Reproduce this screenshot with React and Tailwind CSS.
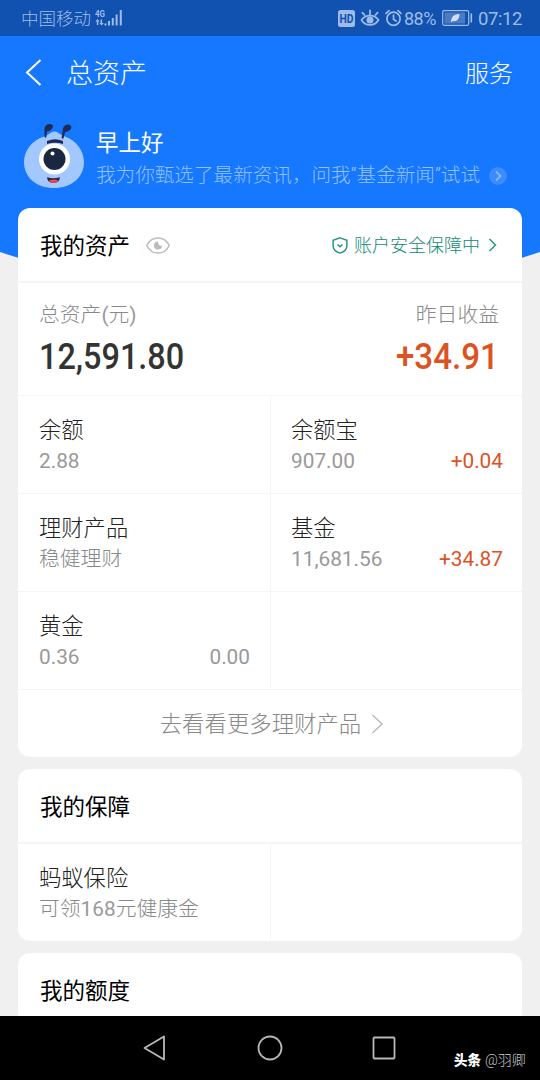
const assets = [
  { name: "余额", value: "2.88" },
  { name: "余额宝", value: "907.00", gain: "+0.04" },
  { name: "理财产品", value: "稳健理财" },
  { name: "基金", value: "11,681.56", gain: "+34.87" },
  { name: "黄金", value: "0.36", gain: "0.00", flat: true },
  null,
];

const insurance = [{ name: "蚂蚁保险", value: "可领168元健康金" }, null];

function StatusBar() {
  return (
    <div className="h-9 bg-[#1151b0] flex items-center justify-between pl-[21px] pr-[18px] text-[#9dbce8] whitespace-nowrap">
      <div className="flex items-center gap-[4px]">
        <span className="text-[17.5px] leading-9 font-light pt-[2px]">中国移动</span>
        <svg width="29" height="18" viewBox="0 0 29 18" fill="currentColor">
          <text x="0" y="7.5" fontSize="9.5" fontWeight="700" textLength="10" lengthAdjust="spacingAndGlyphs">4G</text>
          <path d="M2.500 10l2.200 2.500H3.300V16H1.800v-3.500H.3zM6.500 16.500l-2.200-2.500h1.300v-3.500h1.500V14h1.600z" />
          <path d="M9.5 14.500h2V16.500h-2zM13 12h2v4.500h-2zM16.800 9h2v7.500h-2zM20.600 5.500h2v11h-2zM24.800 1h2v15.500h-2z" />
        </svg>
      </div>
      <div className="flex items-center">
        <svg width="17" height="17" viewBox="0 0 17 17">
          <rect width="17" height="17" rx="2.5" fill="currentColor" />
          <text x="1.500" y="12.8" fontSize="12" fontWeight="700" fill="#1151b0" textLength="14" lengthAdjust="spacingAndGlyphs">HD</text>
        </svg>
        <svg className="ml-[5px]" width="20" height="18" viewBox="0 0 20 18" fill="none" stroke="currentColor" strokeWidth="1.8" strokeLinecap="round">
          <path d="M1.5 11C5.500 5.200 14.500 5.200 18.500 11 14.500 17.600 5.500 17.600 1.500 11z" />
          <circle cx="10" cy="11" r="3.5" fill="currentColor" stroke="none" />
          <path d="M10 5.500V1.500M4.600 6L2.400 3.600M15.400 6l2.200-2.400" />
        </svg>
        <svg className="ml-[5px]" width="17" height="18" viewBox="0 0 17 18" fill="none" stroke="currentColor" strokeWidth="1.700" strokeLinecap="round">
          <circle cx="8.5" cy="9.8" r="6.600" />
          <path d="M8.5 6v4.200l2.600 1.800M1 4.400L4 1.600M16 4.400l-3-2.800" />
        </svg>
        <span className="ml-[2px] w-[34px] text-[18px] tracking-[-0.5px] leading-9 pt-[2px]">88%</span>
        <svg className="ml-[4px]" width="31" height="16" viewBox="0 0 31 16">
          <rect x="0.7" y="0.7" width="26" height="14.600" rx="1.500" fill="none" stroke="currentColor" strokeWidth="1.200" />
          <rect x="2.500" y="2.500" width="20.500" height="11" fill="currentColor" opacity="0.400" />
          <path d="M9 12.500c0-5 2-8 8.500-8.500-.3 5-2.300 7.800-6.700 7z" fill="#cfe0fa" />
          <rect x="28.500" y="3.500" width="1.600" height="9" fill="currentColor" />
        </svg>
        <span className="ml-[5px] text-[18.5px] tracking-[-0.4px] leading-9 pt-[2px]">07:12</span>
      </div>
    </div>
  );
}

function Ant() {
  return (
    <svg width="60" height="66" viewBox="0 0 60 66">
      <path
        d="M30.500 8.500C34 8.500 36 12 41 13.500 52 17 60 28 60 39 60 55 47 65 30 65S0 55 0 39C0 28 8 17 20 13.500 25 12 27 8.500 30.500 8.500z"
        fill="#a3c8ff"
      />
      <g fill="#1e2a55">
        <path d="M20.500 14.500V5.500C21 1.500 25 0 28 1.500 30.500 3.500 27.500 8 23 8.500L22.300 14.500z" />
        <path d="M37.500 15.500L39 5.500C40 2 44 .5 46.500 2.500 49 5 45.500 8.500 41 9L39.500 15.500z" />
        <path d="M23 18q8-3.500 16 0v3q-8-2.500-16 0z" />
      </g>
      <circle cx="30.500" cy="36" r="15.500" fill="#fff" />
      <circle cx="30.500" cy="36" r="11" fill="#1b2740" />
      <circle cx="28.500" cy="30.500" r="2" fill="#fff" />
      <path d="M23 54.300q6.500 2 13 0-.5 5.700-6.500 5.700t-6.500-5.700z" fill="#28233f" />
      <path d="M25 57.500q5-2 9.500 0-1.500 2.500-5 2.500t-4.500-2.500z" fill="#e8484f" />
    </svg>
  );
}

function Header() {
  return (
    <div className="bg-[#1677ff] h-[216px] text-white">
      <div className="h-[72px] flex items-center justify-between pl-[25px] pr-[27px]">
        <div className="flex items-center">
          <svg width="17" height="27" viewBox="0 0 17 27" fill="none" stroke="currentColor" strokeWidth="2">
            <path d="M15.500 1L2 13.500 15.500 26" />
          </svg>
          <span className="ml-6 mt-1 text-[27px] leading-9 font-light">总资产</span>
        </div>
        <span className="mt-1 text-[24px] leading-9 font-light">服务</span>
      </div>
      <div className="flex pl-6 pt-[15px]">
        <Ant />
        <div className="ml-3 pt-1 whitespace-nowrap">
          <div className="text-[22.500px] leading-8">早上好</div>
          <div className="flex items-center text-[#94c1ff]">
            <span className="pt-px text-[19.600px] leading-8 font-light">
              我为你甄选了最新资讯，问我“基金新闻”试试
            </span>
            <svg className="ml-[9px]" width="18" height="18" viewBox="0 0 18 18" fill="none">
              <circle cx="9" cy="9" r="9" fill="#3c8cff" />
              <path d="M7 4.500L11.500 9 7 13.500" stroke="currentColor" strokeWidth="1.500" />
            </svg>
          </div>
        </div>
      </div>
    </div>
  );
}

function Card({ title, extra, children }) {
  return (
    <div className="bg-white rounded-xl">
      <div className="h-[73px] pt-px pl-[22px] pr-6 flex items-center justify-between text-black">
        {title}
        {extra}
      </div>
      {children}
    </div>
  );
}

function CardTitle({ children }) {
  return <span className="pt-px text-[22.500px] leading-8">{children}</span>;
}

function Cell({ item, right }) {
  return (
    <div
      className={
        right
          ? "h-[98px] border-t border-l border-[#f5f5f5] pl-5 pr-[19px] pt-[18px]"
          : "h-[98px] border-t border-[#f5f5f5] pl-[21px] pr-5 pt-[18px]"
      }
    >
      {item && (
        <>
          <div className="text-[22.300px] leading-8 text-[#222222] font-light">{item.name}</div>
          <div className="flex justify-between text-[20.800px] leading-[30px] text-[#999999]">
            <Value text={item.value} />
            {item.gain && (
              <span className={item.flat ? "" : "text-[#dc5223]"}>{item.gain}</span>
            )}
          </div>
        </>
      )}
    </div>
  );
}

// digits keep the regular weight, Chinese text is set light
function Value({ text }) {
  return (
    <span>
      {text.split(/([\d.,]+)/).map((part, i) => (
        <span key={i} className={i % 2 === 1 ? "font-normal" : "font-light text-[#888888]"}>
          {part}
        </span>
      ))}
    </span>
  );
}

function Grid({ items }) {
  return (
    <div className="grid grid-cols-2">
      {items.map((item, i) => (
        <Cell key={i} item={item} right={i % 2 === 1} />
      ))}
    </div>
  );
}

function NavBar() {
  return (
    <div className="h-16 bg-black flex items-center pl-[143px] text-[#b8b8b8]">
      <svg width="23" height="26" viewBox="0 0 23 26" fill="none" stroke="currentColor" strokeWidth="1.800" strokeLinejoin="round">
        <path d="M21 1.500v23L1.500 13z" />
      </svg>
      <svg className="ml-[91px]" width="26" height="26" viewBox="0 0 26 26" fill="none" stroke="currentColor" strokeWidth="1.800">
        <circle cx="13" cy="13" r="11.500" />
      </svg>
      <svg className="ml-[89px]" width="24" height="24" viewBox="0 0 24 24" fill="none" stroke="currentColor" strokeWidth="1.800">
        <rect x="1.500" y="1.500" width="21" height="21" rx="1" />
      </svg>
      <div className="ml-[58px] mt-6 flex gap-1 text-white text-[13.500px] leading-5 whitespace-nowrap">
        <span className="font-black">头条</span>
        <span className="text-[14px] text-[#cccccc] font-light">@羽卿</span>
      </div>
    </div>
  );
}

export default function App() {
  return (
    <div className="w-[540px] h-[1080px] overflow-hidden flex flex-col bg-[#f0f0f0] font-['Roboto','Noto_Sans_CJK_SC',sans-serif]">
      <StatusBar />
      <Header />
      <svg className="block shrink-0" width="540" height="40" viewBox="0 0 540 40">
        <path d="M0 0H540V0Q270 90 0 0z" fill="#1677ff" />
      </svg>
      <div className="relative -mt-[84px] px-[18px] flex-1 min-h-0 overflow-hidden flex flex-col gap-3">
        <Card
          title={
            <div className="flex items-center gap-4">
              <CardTitle>我的资产</CardTitle>
              <svg width="24" height="17" viewBox="0 0 24 17" fill="none" stroke="#bbbbbb" strokeWidth="1.500">
                <path d="M.8 8.500C5.500-1.500 18.500-1.500 23.200 8.500 18.500 18.500 5.500 18.500.8 8.500z" />
                <path d="M12 4.500a4 4 0 1 0 4 4q-4 1-4-4z" fill="#bbbbbb" stroke="none" />
              </svg>
            </div>
          }
          extra={
            <div className="flex items-center text-[#269680]">
              <svg width="16" height="17" viewBox="0 0 16 17" fill="none" stroke="currentColor" strokeWidth="1.500">
                <path d="M8 .9l6.900 2.300V8.500c0 4-3 6.500-6.900 7.600C4.100 15 1.100 12.500 1.100 8.500V3.200z" />
                <path d="M5.500 7.500L8 9.800l2.500-2.300" />
              </svg>
              <span className="ml-1.5 pt-px text-[18px] leading-8 font-light text-[#108a70]">账户安全保障中</span>
              <svg className="ml-2" width="10" height="14" viewBox="0 0 10 14" fill="none" stroke="currentColor" strokeWidth="1.500">
                <path d="M1.500 1l6 6-6 6" />
              </svg>
            </div>
          }
        >
          <div className="h-[114px] border-t-2 border-[#f5f5f5] pt-[15px] pl-[21px] pr-[23px] flex justify-between whitespace-nowrap">
            <div>
              <div className="pt-px text-[20.800px] leading-8 text-[#888888] font-light">总资产<span className="font-normal text-[#999999]">(</span>元<span className="font-normal text-[#999999]">)</span></div>
              <div className="text-[36px] leading-[52px] text-[#333333] font-medium origin-left scale-x-90">
                12,591.80
              </div>
            </div>
            <div className="text-right">
              <div className="pt-px text-[20.800px] leading-8 text-[#888888] font-light">昨日收益</div>
              <div className="text-[36px] leading-[52px] text-[#dc5223] font-medium origin-right scale-x-[0.92]">
                +34.91
              </div>
            </div>
          </div>
          <Grid items={assets} />
          <div className="h-[68px] border-t border-[#f5f5f5] flex items-center justify-center gap-2.5 pl-1 text-[22.400px] leading-8 text-[#888888] font-light">
            <span className="pt-px">去看看更多理财产品</span>
            <svg width="13" height="20" viewBox="0 0 13 20" fill="none" stroke="#bbbbbb" strokeWidth="1.500">
              <path d="M1.500 1l9.500 9-9.500 9" />
            </svg>
          </div>
        </Card>

        <Card title={<CardTitle>我的保障</CardTitle>}>
          <div className="border-t border-[#f5f5f5]">
            <Grid items={insurance} />
          </div>
        </Card>

        <Card title={<CardTitle>我的额度</CardTitle>} />
      </div>
      <NavBar />
    </div>
  );
}
